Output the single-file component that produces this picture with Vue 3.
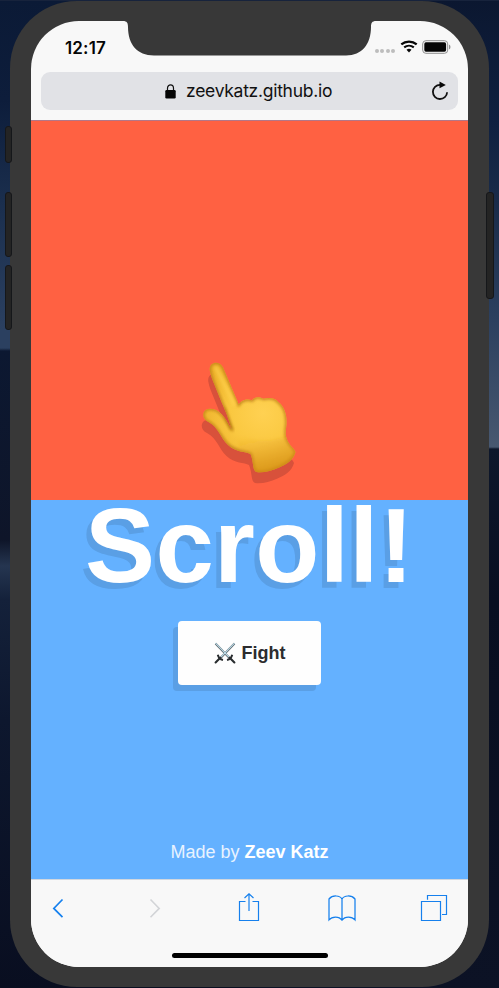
<script setup>
const signal = [0, 1, 2, 3]
const address = 'zeevkatz.github.io'
</script>

<template>
  <main class="desktop">
    <i class="key silent"></i>
    <i class="key louder"></i>
    <i class="key quieter"></i>
    <i class="key power"></i>
    <div class="phone">
      <div class="screen">
        <svg class="notch" viewBox="0 0 437 36" aria-hidden="true">
          <path d="M92 0C96 0 97 2 97 6C97 23 106 34.5 123 34.5H315C331 34.5 340 23 340 6C340 2 341 0 345 0Z" fill="#383838" />
        </svg>
        <header class="status">
          <time>12:17</time>
          <div class="indicators">
            <span class="signal"><i v-for="dot in signal" :key="dot"></i></span>
            <svg class="wifi" width="18" height="13" viewBox="0 0 18 13" fill="none" stroke="#080808">
              <path d="M1.3 4.4C5.6 .7 12.4 .7 16.7 4.4" stroke-width="2.2" />
              <path d="M4.2 7.4C7 5.1 11 5.1 13.8 7.4" stroke-width="2.1" />
              <path d="M6.5 9.7Q9 8 11.5 9.7L9 12.4Z" fill="#080808" stroke="none" />
            </svg>
            <svg class="battery" width="29" height="14" viewBox="0 0 29 14">
              <rect x=".7" y=".7" width="25" height="12.6" rx="3.2" fill="#f8f8f8" stroke="#8e8e8e" />
              <rect x="2.3" y="2.3" width="21.8" height="9.4" rx="1.6" fill="#050505" />
              <path d="M27 4.6Q28.5 5.2 28.5 7T27 9.4Z" fill="#8e8e8e" />
            </svg>
          </div>
        </header>

        <div class="address">
          <svg class="lock" width="11" height="15" viewBox="0 0 11 15">
            <path d="M2.5 7V4.3C2.5 -.3 8.5 -.3 8.5 4.3V7" fill="none" stroke="#111" stroke-width="1.2" />
            <rect x=".3" y="6" width="10.4" height="8.4" rx="1.2" fill="#050505" />
          </svg>
          <span>{{ address }}</span>
          <svg class="reload" width="18" height="20" viewBox="0 0 18 20">
            <path d="M9 3.8A7.1 7.1 0 1 0 16.1 11.2" fill="none" stroke="#111" stroke-width="1.8" />
            <path d="M8.5 .4L14.8 3.9L8.5 7.3Z" fill="#080808" />
          </svg>
        </div>

        <section class="page">
          <div class="upper">
            <svg class="hand" width="120" height="140" viewBox="0 0 120 140">
              <defs>
                <radialGradient id="skin" gradientUnits="userSpaceOnUse" cx="73" cy="63" r="66">
                  <stop offset="0" stop-color="#ffd152" />
                  <stop offset=".5" stop-color="#fac840" />
                  <stop offset="1" stop-color="#ecb02a" />
                </radialGradient>
                <linearGradient id="cuff" gradientUnits="userSpaceOnUse" x1="76" y1="80" x2="86" y2="120">
                  <stop offset="0" stop-color="#df951e" stop-opacity="0" />
                  <stop offset="1" stop-color="#d18b16" stop-opacity=".7" />
                </linearGradient>
                <path id="palm" d="M19.8 20.5C18.5 11.5 30 10 33.3 18L48.8 54.5C51 50 58 48.3 62 50.5C65 46.2 70 46.8 73.5 48.8C79 47 86 48.2 88.3 52C95 57 97 66 96.5 74C96 80 95 84 96.5 88C98.5 95 104 98 105.5 102C103.5 110 96 114.5 89 117.5C81 121 73 123 66.5 122C62 120 64 112 60.5 104C56 101.5 46 102.5 38 95C30.5 88 28.5 77 18.5 72C14.5 70.5 12.5 66.5 13.5 63C15 58 21 58 26 60C32 62.5 37 71 41.5 79.5C39 69 35 60 31.5 52L25 36C22.5 30 20.7 26 19.8 20.5Z" />
                <clipPath id="palm-clip"><use href="#palm" /></clipPath>
                <filter id="soften" x="-20%" y="-20%" width="140%" height="140%"><feGaussianBlur stdDeviation="1.8" /></filter>
              </defs>
              <use href="#palm" x="-1.5" y="11" fill="#d8513b" />
              <use href="#palm" fill="url(#skin)" />
              <g clip-path="url(#palm-clip)">
                <use href="#palm" fill="none" stroke="#bd7b14" stroke-width="2.4" filter="url(#soften)" />
                <path d="M45 84L58 126H112V76Q85 100 45 84Z" fill="url(#cuff)" filter="url(#soften)" />
                <path d="M34 58Q36 70 43 81" stroke="#a76b08" stroke-width="2.5" opacity=".5" fill="none" filter="url(#soften)" />
                <path d="M26 18L44 54" stroke="#ffd04d" stroke-width="4" stroke-linecap="round" fill="none" opacity=".65" filter="url(#soften)" />
              </g>
            </svg>
          </div>
          <div class="lower">
            <h1>Scroll!</h1>
            <button class="fight" type="button">
              <svg width="22" height="22" viewBox="0 0 22 22" fill="none">
                <path d="M1.5 1.5L15.5 16M20.5 1.5L6.5 16" stroke="#555e63" stroke-width="2" />
                <path d="M1.4 1.1L15 15M20.6 1.1L7 15" stroke="#b9d9e6" stroke-width="1.1" />
                <path d="M3.8 12.7Q4.8 17 9 18M18.2 12.7Q17.2 17 13 18" stroke="#292d2f" stroke-width="2" />
                <path d="M6.3 15.8L1.6 20.4M15.7 15.8L20.4 20.4" stroke="#292d2f" stroke-width="2.1" stroke-linecap="round" />
              </svg>
              <span>Fight</span>
            </button>
            <footer><span>Made by </span><strong>Zeev Katz</strong></footer>
          </div>
        </section>

        <nav class="toolbar">
          <div class="actions">
            <svg class="back" width="12" height="20" viewBox="0 0 12 20"><path d="M10.5 1.5L1.8 10.4L10.5 19.2" fill="none" stroke="#1580ee" stroke-width="1.7" /></svg>
            <svg class="forward" width="12" height="20" viewBox="0 0 12 20"><path d="M1.5 1.5L10.2 10.4L1.5 19.2" fill="none" stroke="#d2d4d7" stroke-width="1.6" /></svg>
            <svg class="share" width="22" height="30" viewBox="0 0 22 30" fill="none" stroke="#1680ed" stroke-width="1.2">
              <path d="M7.5 8.5H1.5V27.5H20.5V8.5H14.5M11 18V.8M6.5 5L11 .8L15.5 5" />
            </svg>
            <svg class="book" width="28" height="28" viewBox="0 0 28 28" fill="none" stroke="#1680ed" stroke-width="1.25">
              <path d="M14 5C12 1.2 4.5 .8 1 5V25.8C4 22.3 11 21.8 14 26.2C17 21.8 24 22.3 27 25.8V5C23.5 .8 16 1.2 14 5ZM14 5V26.2" />
            </svg>
            <svg class="tabs" width="28" height="28" viewBox="0 0 28 28" fill="none" stroke="#1680ed" stroke-width="1.2">
              <path d="M1.5 7.5H20.5V26.5H1.5ZM7.5 5.8V1.5H26.5V20.5H22" />
            </svg>
          </div>
          <div class="home"></div>
        </nav>
      </div>
    </div>
  </main>
</template>

<style>
body { background: #0b1429; }
</style>

<style scoped>
* { box-sizing: border-box; }
svg { display: block; flex: none; }
.desktop {
  position: relative;
  width: 499px;
  height: 988px;
  padding: 1px 10px;
  overflow: hidden;
  font-family: "Liberation Sans", Arial, sans-serif;
  background:
    linear-gradient(#17233c, #17233c) top / 100% 1px no-repeat,
    linear-gradient(#0b1a36 0, #0d1d3b 100px, #1a2e4d 200px, #2b4060 330px, #2b4060 348px, #0c1831 351px, #0e1529 540px, #253550 566px, #14213a 600px, #0d172e 720px, #090e20 988px) left / 250px 100% no-repeat,
    linear-gradient(#0b1730 0, #0f2040 120px, #192b49 200px, #2c405f 320px, #485870 447px, #0d172b 449px, #080e20 600px, #0c1225 988px) right / 249px 100% no-repeat;
}
.phone {
  width: 479px;
  height: 986px;
  padding: 20px 21px;
  border-radius: 67px;
  background: #383838;
  position: relative;
}
.key { position: absolute; z-index: 1; background: #242424; border: 1px solid #15171a; border-radius: 3px; }
.silent { left: 5px; top: 126px; width: 7px; height: 37px; }
.louder { left: 5px; top: 192px; width: 7px; height: 65px; }
.quieter { left: 5px; top: 265px; width: 7px; height: 65px; }
.power { left: 486px; top: 192px; width: 8px; height: 107px; }
.screen {
  position: relative;
  display: flex;
  flex-direction: column;
  width: 437px;
  height: 946px;
  border-radius: 48px;
  overflow: hidden;
  background: #f8f8f8;
}
.notch { position: absolute; top: 0; left: 0; width: 437px; height: 36px; }
.status { height: 51px; flex: none; padding: 0 17px 0 34px; display: flex; justify-content: space-between; align-items: center; }
.status time { font: 600 17px/20px Inter, sans-serif; color: #050505; letter-spacing: .15px; margin-top: 2px; }
.indicators { display: flex; align-items: center; }
.signal { display: flex; gap: 1.4px; margin: 9px 5px 0 0; }
.signal i { width: 4px; height: 4px; border-radius: 50%; background: #bdbdbd; }
.battery { margin-left: 4px; }
.address {
  display: flex;
  align-items: center;
  height: 38px;
  flex: none;
  margin: 0 10px 10px;
  padding-left: 124px;
  border-radius: 9px;
  background: #e1e2e6;
  color: #111;
}
.address span { margin-left: 10px; font: 400 17.5px/22px Inter, sans-serif; letter-spacing: -.28px; white-space: nowrap; }
.reload { margin-left: auto; margin-right: 9px; }
.page { height: 759px; flex: none; display: flex; flex-direction: column; border-top: 1px solid #b47788; }
.upper { height: 379px; flex: none; padding: 229px 0 0 159px; background: #ff6142; }
.lower { height: 379px; display: flex; flex-direction: column; align-items: center; background: #64b1ff; color: white; }
h1 { margin: 0; height: 120.5px; font-size: 105px; line-height: 91px; letter-spacing: .3px; font-weight: 700; text-shadow: -5px 6px 0 #5a9fe5; white-space: nowrap; }
.fight {
  width: 143px;
  height: 64.5px;
  flex: none;
  display: flex;
  align-items: center;
  justify-content: center;
  gap: 6px;
  padding: 1px 0 0;
  border: 0;
  border-radius: 4px;
  background: #fefefe;
  color: #2c2c2e;
  box-shadow: -5px 6px 0 #5a9fe5;
  font: bold 18px/22px "Liberation Sans", sans-serif;
}
footer { margin-top: 156px; font-size: 18px; line-height: 22px; white-space: pre; }
footer span { color: #e8f3ff; }
.toolbar { flex: 1; border-top: 1px solid #d1d7df; background: #f8f8f8; display: flex; flex-direction: column; align-items: center; }
.actions { width: 100%; height: 56px; padding-left: 21px; display: flex; align-items: center; }
.forward { margin-left: 85px; }
.share { margin-left: 77px; }
.book { margin-left: 68px; }
.tabs { margin-left: 64px; }
.home { width: 156px; height: 5px; border-radius: 3px; background: #000; margin-top: 17px; }
</style>
